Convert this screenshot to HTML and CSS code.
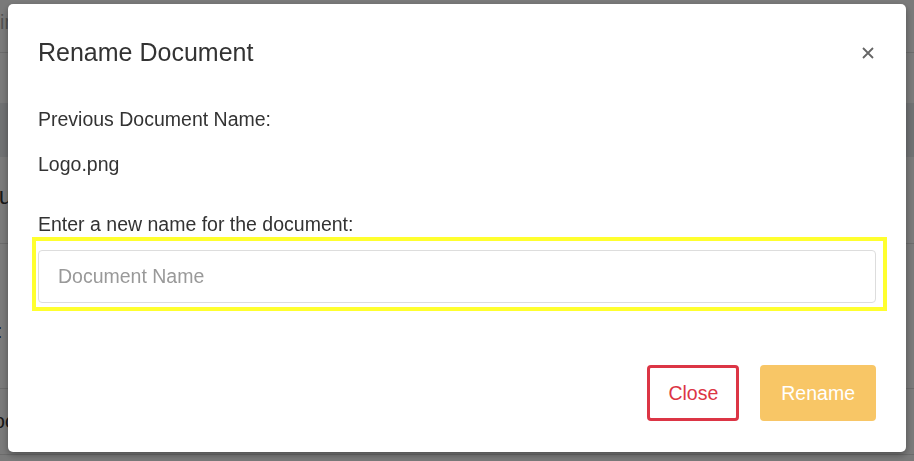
FILE: index.html
```html
<!DOCTYPE html>
<html lang="en">
    <head>
        <meta charset="UTF-8">
        <meta name="viewport" content="width=device-width, initial-scale=1.0">
        <link rel="stylesheet" href="styles.css">
        <title>Rename Document</title>
    </head>
    <body>
        <div class="page">
            <div class="page-row top-row"><span class="cut-text faint admin">Admin</span></div>
            <div class="page-row gap-row"></div>
            <div class="page-row band-row"></div>
            <div class="page-row doc-row"><span class="cut-text heading">Docu</span></div>
            <div class="page-row field-row"><span class="cut-text colon">Name:</span></div>
            <div class="page-row last-row"><span class="cut-text docu">Docu</span></div>
        </div>

        <div class="backdrop">
            <div class="modal">
                <div class="modal-header">
                    <h5 class="modal-title">Rename Document</h5>
                    <button class="close-x" aria-label="Close">
                        <svg width="12" height="12" viewBox="0 0 12 12">
                            <path d="M1 1 L11 11 M11 1 L1 11" stroke="#666" stroke-width="1.8" fill="none"/>
                        </svg>
                    </button>
                </div>
                <div class="modal-body">
                    <p class="prev-label">Previous Document Name:</p>
                    <p class="prev-name">Logo.png</p>
                    <label class="new-label" for="docName">Enter a new name for the document:</label>
                    <div class="highlight">
                        <input id="docName" class="name-input" type="text" placeholder="Document Name">
                    </div>
                </div>
                <div class="modal-footer">
                    <button class="btn btn-close">Close</button>
                    <button class="btn btn-rename">Rename</button>
                </div>
            </div>
        </div>
    </body>
</html>
```

FILE: styles.css
```css
* {
    box-sizing: border-box;
}
body, html {
    width: 100%;
    height: 100%;
    margin: 0;
}
body {
    font-family: "Liberation Sans", Arial, sans-serif;
    color: #333;
    background: #fff;
    overflow: hidden;
}

/* page behind the dialog */
.page {
    height: 461px;
}
.page-row {
    display: flex;
    align-items: center;
    overflow: hidden;
    border-bottom: 1px solid #e0e0e0;
}
.top-row {
    height: 53px;
}
.gap-row {
    height: 50px;
    border-bottom: none;
}
.band-row {
    height: 54px;
    background: #e9ecef;
    border-bottom: none;
}
.doc-row {
    height: 87px;
}
.field-row {
    height: 145px;
}
.last-row {
    height: 66px;
}
.cut-text {
    font-size: 19.5px;
    white-space: nowrap;
}
.faint {
    color: #aaa;
}
.admin {
    margin-left: -40px;
    margin-top: -8px;
}
.heading {
    font-size: 24px;
    margin-left: -44px;
    margin-top: -8px;
}
.colon {
    margin-left: -55px;
    margin-top: 30px;
}
.docu {
    margin-left: -20px;
    margin-top: 0;
}

/* dialog */
.backdrop {
    position: fixed;
    top: 0;
    left: 0;
    right: 0;
    bottom: 0;
    background: rgba(0, 0, 0, 0.52);
    padding: 4px 8px;
}
.modal {
    height: 448px;
    background: #fff;
    border-radius: 5px;
    box-shadow: 0 3px 7px rgba(0, 0, 0, 0.35);
    display: flex;
    flex-direction: column;
}
.modal-header {
    display: flex;
    justify-content: space-between;
    align-items: center;
    padding: 33px 32px 0 30px;
}
.modal-title {
    margin: 0;
    font-size: 25px;
    font-weight: 400;
    line-height: 30px;
    color: #333;
}
.close-x {
    border: none;
    background: none;
    padding: 0;
    margin-top: 2px;
    width: 12px;
    height: 12px;
    display: flex;
}
.modal-body {
    padding: 37px 30px 0 30px;
    font-size: 19.5px;
}
.modal-body p {
    margin: 0 0 15px;
    line-height: 30px;
}
.modal-body .prev-name {
    margin-bottom: 33px;
}
.new-label {
    display: block;
    line-height: 24px;
    margin-bottom: 1px;
}
.highlight {
    border: 4px solid #ffff2e;
    margin: 0 -11px 0 -6px;
    padding: 9px 7px 4px 2px;
}
.name-input {
    display: block;
    width: 100%;
    height: 53px;
    border: 1px solid #ddd;
    border-radius: 4px;
    padding: 0 19px;
    font-family: inherit;
    font-size: 19.5px;
    color: #333;
    outline: none;
}
.name-input::placeholder {
    color: #999;
}
.modal-footer {
    margin-top: auto;
    display: flex;
    justify-content: flex-end;
    gap: 21px;
    padding: 0 30px 31px;
}
.btn {
    height: 56px;
    padding: 0 18px;
    border-radius: 4px;
    font-family: inherit;
    font-size: 19.5px;
}
.btn-close {
    background: #fff;
    border: 3px solid #dc3545;
    color: #dc3545;
}
.btn-rename {
    background: #f8c666;
    border: 3px solid #f8c666;
    color: #fff;
}
```
